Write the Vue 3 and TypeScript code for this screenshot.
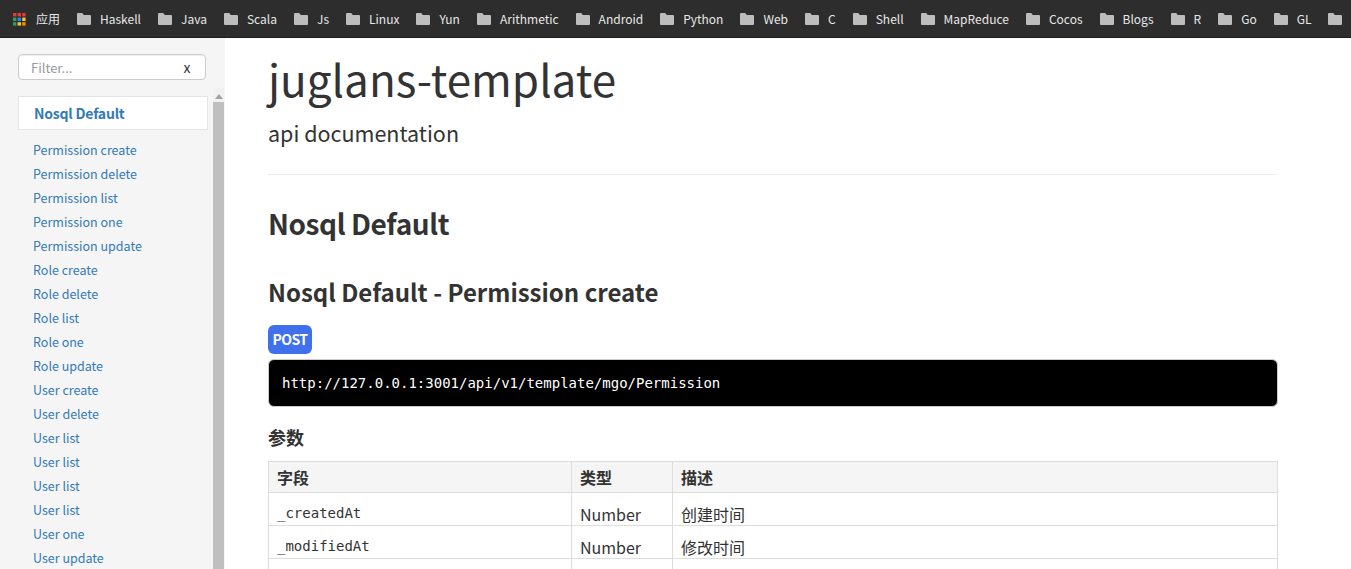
<template>
  <div class="page">
    <div class="bookmarks">
      <div class="bookmark apps">
        <svg class="apps-icon" width="14" height="14" viewBox="0 0 14 14">
          <rect v-for="cell in appCells" :key="cell.key" :x="cell.x" :y="cell.y" width="3.4" height="3.4" :fill="cell.color" />
        </svg>
        <span>应用</span>
      </div>
      <div v-for="(name, index) in bookmarks" :key="index" class="bookmark">
        <svg class="folder" width="14" height="12" viewBox="0 0 14 12">
          <path d="M1 0h4.2l1.6 2H13a1 1 0 0 1 1 1v8a1 1 0 0 1-1 1H1a1 1 0 0 1-1-1V1a1 1 0 0 1 1-1z" fill="#bdbdbd" />
        </svg>
        <span v-if="name">{{ name }}</span>
      </div>
    </div>

    <div class="main">
      <aside class="sidebar">
        <div class="filter">
          <input type="text" placeholder="Filter..." />
          <span class="clear">x</span>
        </div>
        <div class="nav-wrap">
          <nav class="nav">
            <div class="nav-head">Nosql Default</div>
            <a v-for="(link, index) in links" :key="index" class="nav-link">{{ link }}</a>
          </nav>
          <div class="scrollbar">
            <svg class="arrow" width="8" height="5" viewBox="0 0 8 5"><path d="M4 0l4 5H0z" fill="#a3a3a3" /></svg>
            <div class="thumb"></div>
          </div>
        </div>
      </aside>

      <main class="content">
        <h1>juglans-template</h1>
        <p class="subtitle">api documentation</p>
        <hr />
        <h2>Nosql Default</h2>
        <h3>Nosql Default - Permission create</h3>
        <span class="method">POST</span>
        <pre class="url">http://127.0.0.1:3001/api/v1/template/mgo/Permission</pre>
        <h4>参数</h4>
        <table>
          <thead>
            <tr>
              <th class="col-field">字段</th>
              <th class="col-type">类型</th>
              <th>描述</th>
            </tr>
          </thead>
          <tbody>
            <tr v-for="row in rows" :key="row.field">
              <td><code>{{ row.field }}</code></td>
              <td>{{ row.type }}</td>
              <td>{{ row.desc }}</td>
            </tr>
            <tr class="empty">
              <td></td>
              <td></td>
              <td></td>
            </tr>
          </tbody>
        </table>
      </main>
    </div>
  </div>
</template>

<script setup lang="ts">
// the last folder's label falls past the right edge of the window
const bookmarks = [
  'Haskell', 'Java', 'Scala', 'Js', 'Linux', 'Yun', 'Arithmetic', 'Android', 'Python',
  'Web', 'C', 'Shell', 'MapReduce', 'Cocos', 'Blogs', 'R', 'Go', 'GL', ''
]

const links = [
  'Permission create', 'Permission delete', 'Permission list', 'Permission one', 'Permission update',
  'Role create', 'Role delete', 'Role list', 'Role one', 'Role update',
  'User create', 'User delete', 'User list', 'User list', 'User list', 'User list', 'User one', 'User update'
]

const rows = [
  { field: '_createdAt', type: 'Number', desc: '创建时间' },
  { field: '_modifiedAt', type: 'Number', desc: '修改时间' }
]

// Launcher grid colours, row by row
const appColors = ['#e53935', '#e53935', '#e53935', '#2e9e5b', '#1e88e5', '#fbc02d', '#2e9e5b', '#fbc02d', '#fb8c00']
const appCells = appColors.map((color, i) => ({
  key: i,
  color,
  x: (i % 3) * 4.6 + 1,
  y: Math.floor(i / 3) * 4.6 + 1
}))
</script>

<style>
html, body {
  margin: 0;
  height: 100%;
  overflow: hidden;
  background: #fff;
}
</style>

<style scoped>
.page {
  width: 1351px;
  height: 569px;
  display: flex;
  flex-direction: column;
  overflow: hidden;
  font-family: "Noto Sans CJK SC", "Noto Sans", sans-serif;
  color: #333;
}

.bookmarks {
  flex: none;
  height: 37px;
  background: #2d2d2d;
  border-bottom: 1px solid #1c1c1c;
  display: flex;
  align-items: center;
  gap: 17px;
  padding-left: 12px;
  overflow: hidden;
  white-space: nowrap;
  color: #e8e8e8;
  font-size: 12px;
}

.bookmark {
  flex: none;
  display: flex;
  align-items: center;
  gap: 9px;
}

.apps {
  gap: 10px;
}

.main {
  flex: 1;
  min-height: 0;
  display: flex;
}

.sidebar {
  flex: none;
  width: 225px;
  background: #f5f5f5;
  display: flex;
  flex-direction: column;
  padding-top: 16px;
  box-sizing: border-box;
}

.filter {
  width: 188px;
  height: 26px;
  margin-left: 18px;
  box-sizing: border-box;
  background: #fff;
  border: 1px solid #ccc;
  border-radius: 4px;
  display: flex;
  align-items: center;
  box-shadow: inset 0 1px 1px rgba(0, 0, 0, 0.075);
}

.filter input {
  flex: 1;
  min-width: 0;
  border: 0;
  outline: 0;
  padding: 0 0 0 12px;
  background: transparent;
  font: inherit;
  font-size: 13px;
  color: #999;
}

.filter input::placeholder {
  color: #999;
  opacity: 1;
}

.clear {
  width: 36px;
  text-align: center;
  font-size: 14px;
  line-height: 24px;
}

.nav-wrap {
  flex: 1;
  min-height: 0;
  display: flex;
  margin-top: 16px;
  padding-left: 18px;
  gap: 5px;
}

.nav {
  width: 190px;
  flex: none;
  overflow: hidden;
}

.nav-head {
  height: 34px;
  box-sizing: border-box;
  background: #fff;
  border: 1px solid #e5e5e5;
  padding-left: 15px;
  line-height: 32px;
  font-size: 14px;
  letter-spacing: -0.2px;
  font-weight: 700;
  color: #337ab7;
  margin-bottom: 8px;
}

.nav-link {
  display: block;
  height: 24px;
  line-height: 24px;
  padding-left: 15px;
  font-size: 12.5px;
  color: #337ab7;
}

.scrollbar {
  flex: none;
  width: 11px;
  margin-top: -8px;
  display: flex;
  flex-direction: column;
  align-items: center;
  background: #f1f1f1;
}

.arrow {
  flex: none;
  margin: 6px 0 3px;
}

.thumb {
  flex: 1;
  width: 100%;
  background: #bfbfbf;
}

.content {
  flex: 1;
  min-width: 0;
  padding: 0 73px 0 43px;
  overflow: hidden;
}

h1 {
  margin: 9px 0 0;
  font-size: 44px;
  line-height: 62px;
  font-weight: 400;
}

.subtitle {
  margin: 7px 0 0;
  font-size: 21.5px;
  line-height: 34px;
  font-weight: 400;
}

hr {
  margin: 24px 0 0;
  border: 0;
  border-top: 1px solid #eee;
}

h2 {
  margin: 25px 0 0;
  font-size: 28px;
  letter-spacing: -0.4px;
  line-height: 46px;
  font-weight: 700;
}

h3 {
  margin: 28px 0 0;
  font-size: 24px;
  line-height: 36px;
  font-weight: 700;
}

.method {
  display: block;
  width: 44px;
  height: 29px;
  margin-top: 15px;
  border-radius: 6px;
  background: #4070ec;
  color: #fff;
  text-align: center;
  font-size: 14px;
  letter-spacing: -0.6px;
  line-height: 28px;
  font-weight: 700;
}

.url {
  margin: 5px 0 0;
  height: 48px;
  box-sizing: border-box;
  padding: 0 13px;
  background: #000;
  border: 1px solid #ccc;
  border-radius: 6px;
  color: #fff;
  font-family: "DejaVu Sans Mono", monospace;
  font-size: 14px;
  line-height: 46px;
}

h4 {
  margin: 15px 0 0;
  font-size: 18px;
  line-height: 30px;
  font-weight: 700;
}

table {
  width: 100%;
  margin-top: 9px;
  border-collapse: collapse;
  table-layout: fixed;
  font-size: 16px;
}

th, td {
  border: 1px solid #ddd;
  padding: 0 8px;
  text-align: left;
}

th {
  height: 31px;
  box-sizing: border-box;
  background: #f5f5f5;
  font-weight: 700;
}

.col-field {
  width: 303px;
  box-sizing: border-box;
}

.col-type {
  width: 101px;
  box-sizing: border-box;
}

td {
  height: 33px;
  box-sizing: border-box;
  vertical-align: bottom;
  line-height: 20px;
  padding-bottom: 1px;
}

code {
  font-family: "DejaVu Sans Mono", monospace;
  font-size: 14px;
  position: relative;
  top: -1px;
}

.empty td {
  height: 40px;
}
</style>
